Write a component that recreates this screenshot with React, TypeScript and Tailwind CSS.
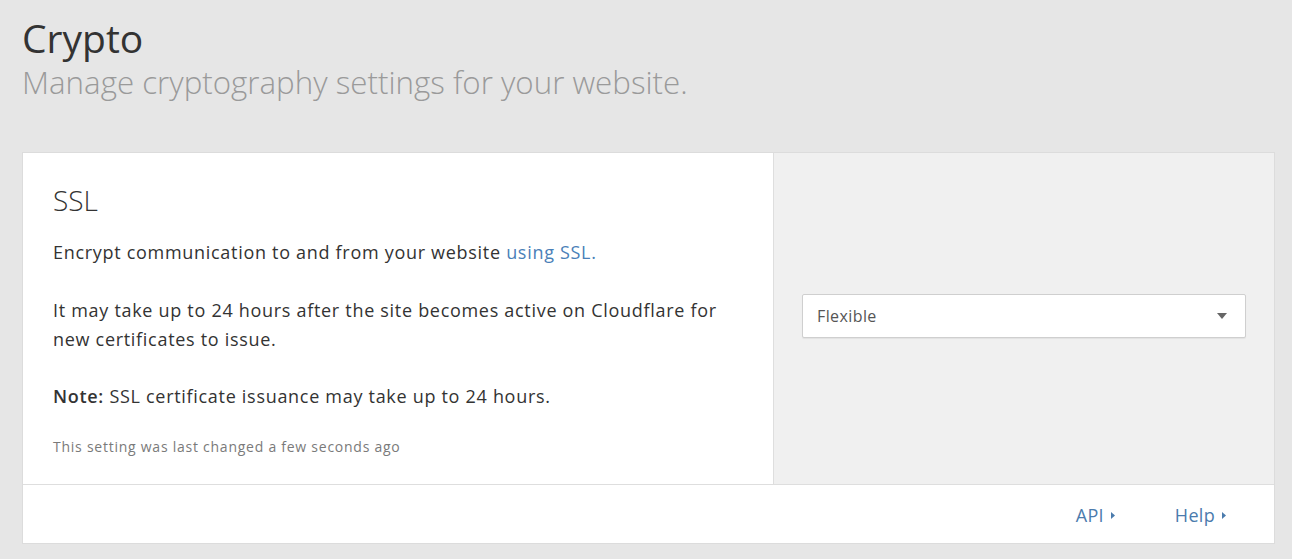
function SelectBox() {
  return (
    <div className="flex h-[44px] w-full items-center justify-between rounded-[2px] border border-[#cfcfcf] bg-white pl-[14px] pr-[18px] shadow-[0_1px_1px_rgba(0,0,0,0.06)]">
      <span className="text-[16px] tracking-[0.4px] text-[#555]">Flexible</span>
      <svg width="10" height="6" viewBox="0 0 10 6" className="text-[#666]">
        <path d="M0 0 L10 0 L5 6 Z" fill="currentColor" />
      </svg>
    </div>
  )
}

function FooterLink({ label }: { label: string }) {
  return (
    <a className="flex items-center gap-[7px] text-[18px] tracking-[0.3px] text-[#4b7bad]">
      {label}
      <svg width="4" height="7" viewBox="0 0 4 7">
        <path d="M0 0 L4 3.5 L0 7 Z" fill="currentColor" />
      </svg>
    </a>
  )
}

export default function App() {
  return (
    <div
      className="min-h-[559px] bg-[#e6e6e6] pl-[22px] pr-[17px] pt-[13px] text-[#333]"
      style={{ fontFamily: '"Open Sans", "Liberation Sans", sans-serif' }}
    >
      <h1 className="text-[39px] leading-[50px] font-normal text-[#333]">Crypto</h1>
      <p className="text-[31.3px] leading-[38px] font-light text-[#9a9a9a]">
        Manage cryptography settings for your website.
      </p>

      {/* card */}
      <div className="mt-[51px] border border-[#dcdcdc] bg-white">
        <div className="flex">
          <div className="w-[751px] border-r border-[#dedede] px-[30px] pt-[30px] pb-[27px]">
            <h2 className="text-[28px] leading-[34px] font-light text-[#333]">SSL</h2>
            <p className="mt-[21px] text-[18px] leading-[29px] tracking-[0.7px]">
              Encrypt communication to and from your website{' '}
              <a className="text-[#4a80b8]">using SSL.</a>
            </p>
            <p className="mt-[29px] text-[18px] leading-[29px] tracking-[0.7px]">
              It may take up to 24 hours after the site becomes active on Cloudflare for
              <br />
              new certificates to issue.
            </p>
            <p className="mt-[28px] text-[18px] leading-[29px] tracking-[0.7px]">
              <b className="font-semibold">Note:</b> SSL certificate issuance may take up to 24 hours.
            </p>
            <p className="mt-[26px] text-[14px] leading-[20px] tracking-[0.75px] text-[#7a7a7a]">
              This setting was last changed a few seconds ago
            </p>
          </div>
          <div className="flex flex-1 items-center bg-[#f0f0f0] px-[28px] pb-[6px]">
            <SelectBox />
          </div>
        </div>
        <div className="flex h-[59px] items-center justify-end gap-[60px] border-t border-[#dedede] pt-[2px] pr-[48px]">
          <FooterLink label="API" />
          <FooterLink label="Help" />
        </div>
      </div>
    </div>
  )
}
